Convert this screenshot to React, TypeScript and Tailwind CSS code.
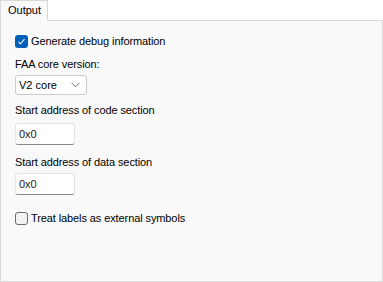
const font = { fontFamily: '"Liberation Sans", Arial, sans-serif' };

function CheckRow({ checked, label }: { checked: boolean; label: string }) {
  return (
    <label className="flex items-center h-4 text-[11px] tracking-[-0.1px] text-black">
      {checked ? (
        <span className="w-[13px] h-[13px] rounded-[3px] bg-[#005fb8] flex items-center justify-center">
          <svg width="9" height="9" viewBox="0 0 9 9">
            <path d="M1.5 4.8 L3.5 6.8 L7.5 2.2" fill="none" stroke="white" strokeWidth="1.1" />
          </svg>
        </span>
      ) : (
        <span className="w-[13px] h-[13px] rounded-[3px] border border-[#6b6b6b] bg-[#f3f3f3]" />
      )}
      <span className="ml-[3px]">{label}</span>
    </label>
  );
}

function AddrInput({ value }: { value: string }) {
  return (
    <div className="w-[60px] h-[22px] bg-white border border-[#e3e3e3] border-b-[#8a8a8a] rounded-[3px] flex items-center pl-[3px] text-[11px] text-[#1a1a1a]">
      {value}
    </div>
  );
}

const labelCls = 'h-[14px] leading-[14px] text-[11px] tracking-[-0.1px] text-black';

export default function App() {
  return (
    <div className="w-[383px] h-[282px] bg-white flex flex-col" style={font}>
      <div className="flex">
        <div className="h-[21px] w-[48px] -mb-px bg-[#f9f9f9] border border-b-0 border-[#d9d9d9] pl-[7px] text-[11px] text-black leading-[19px] relative z-10">
          Output
        </div>
      </div>
      <div className="w-[383px] h-[262px] bg-[#f9f9f9] border border-[#d9d9d9] pl-[14px] pt-[12px] flex flex-col items-start">
        <CheckRow checked label="Generate debug information" />
        <div className={`mt-[8px] ${labelCls}`}>FAA core version:</div>
        <div className="mt-[4px] w-[72px] h-[20px] bg-white border border-[#cccccc] rounded-[3px] flex items-center justify-between pl-[3px] pr-[6px] text-[11px] text-black">
          <span>V2 core</span>
          <svg width="9" height="6" viewBox="0 0 9 6">
            <path d="M0.5 0.8 L4.5 4.8 L8.5 0.8" fill="none" stroke="#6b6b6b" strokeWidth="1" />
          </svg>
        </div>
        <div className={`mt-[8px] ${labelCls}`}>Start address of code section</div>
        <div className="mt-[6px]">
          <AddrInput value="0x0" />
        </div>
        <div className={`mt-[10px] ${labelCls}`}>Start address of data section</div>
        <div className="mt-[4px]">
          <AddrInput value="0x0" />
        </div>
        <div className="mt-[15px]">
          <CheckRow checked={false} label="Treat labels as external symbols" />
        </div>
      </div>
    </div>
  );
}
